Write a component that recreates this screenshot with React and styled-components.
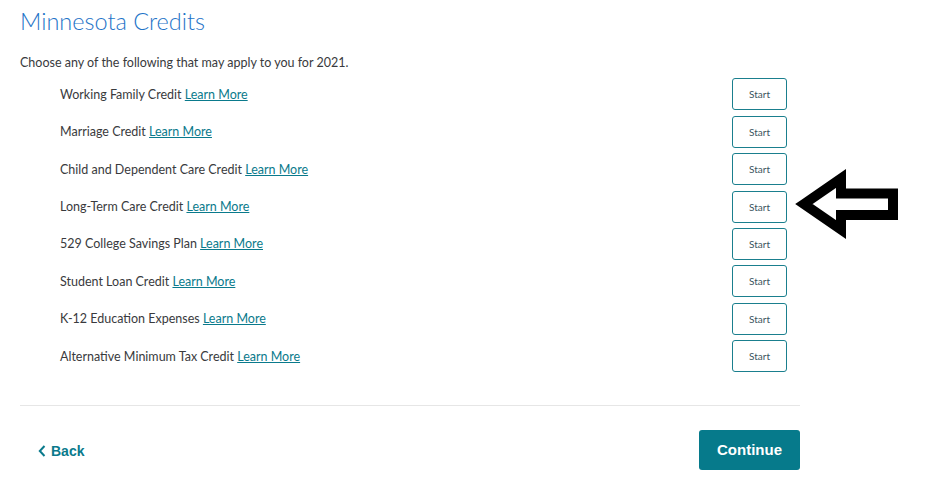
import styled, { createGlobalStyle } from 'styled-components';

const GlobalStyle = createGlobalStyle`
  body {
    margin: 0;
    background: #fff;
    font-family: Lato, "Open Sans", sans-serif;
    color: #393a3d;
  }
`;

const Page = styled.div`
  position: relative;
  width: 780px;
  padding: 6px 0 0 20px;
`;

const Title = styled.h1`
  margin: 0;
  font-size: 23.5px;
  line-height: 30px;
  font-weight: 300;
  color: #1f74c8;
`;

const Intro = styled.p`
  margin: 18px 0 0;
  font-size: 12.5px;
  line-height: 18px;
`;

const CreditList = styled.ul`
  list-style: none;
  margin: 3.5px 0 0;
  padding: 0 13px 0 40px;
`;

const CreditRow = styled.li`
  display: flex;
  align-items: center;
  justify-content: space-between;
  height: 37.45px;
  font-size: 12.5px;
`;

const LearnMore = styled.a`
  color: #0a7a8c;
  text-decoration: underline;
  cursor: pointer;
`;

const StartButton = styled.button`
  width: 55px;
  height: 32px;
  border: 1px solid #1a7f8e;
  border-radius: 3px;
  background: #fff;
  font-family: Lato, sans-serif;
  font-size: 10px;
  color: #3b5560;
  cursor: pointer;
`;

const Divider = styled.hr`
  border: 0;
  border-top: 1px solid #e6e6e6;
  margin: 29.5px 0 0;
`;

const Footer = styled.div`
  display: flex;
  align-items: center;
  justify-content: space-between;
  margin-top: 24px;
`;

const BackLink = styled.a`
  display: flex;
  align-items: center;
  gap: 5px;
  margin-left: 18px;
  padding-top: 2px;
  font-family: "Liberation Sans", Arial, sans-serif;
  font-weight: 700;
  font-size: 14px;
  color: #0a7a8c;
  cursor: pointer;
`;

const ContinueButton = styled.button`
  width: 101px;
  height: 40px;
  border: 0;
  border-radius: 3px;
  background: #067a8b;
  color: #fff;
  font-family: "Liberation Sans", Arial, sans-serif;
  font-weight: 700;
  font-size: 15px;
  cursor: pointer;
`;

const Pointer = styled.svg`
  position: absolute;
  left: 790px;
  top: 165px;
`;

const credits = [
  'Working Family Credit',
  'Marriage Credit',
  'Child and Dependent Care Credit',
  'Long-Term Care Credit',
  '529 College Savings Plan',
  'Student Loan Credit',
  'K-12 Education Expenses',
  'Alternative Minimum Tax Credit',
];

export default function App() {
  return (
    <Page>
      <GlobalStyle />
      <Title>Minnesota Credits</Title>
      <Intro>Choose any of the following that may apply to you for 2021.</Intro>
      <CreditList>
        {credits.map((name) => (
          <CreditRow key={name}>
            <span>
              {name} <LearnMore>Learn More</LearnMore>
            </span>
            <StartButton>Start</StartButton>
          </CreditRow>
        ))}
      </CreditList>
      <Divider />
      <Footer>
        <BackLink>
          <svg width="8" height="12" viewBox="0 0 8 12">
            <path d="M6.5 1 L1.8 6 L6.5 11" fill="none" stroke="#0a7a8c" strokeWidth="2" />
          </svg>
          Back
        </BackLink>
        <ContinueButton>Continue</ContinueButton>
      </Footer>
      <Pointer width="115" height="80" viewBox="790 165 115 80">
        <polygon
          points="804,204 841,178.5 841,193.5 893,193.5 893,215 841,215 841,229.5"
          fill="#fff"
          stroke="#000"
          strokeWidth="10"
          strokeLinejoin="miter"
        />
      </Pointer>
    </Page>
  );
}
